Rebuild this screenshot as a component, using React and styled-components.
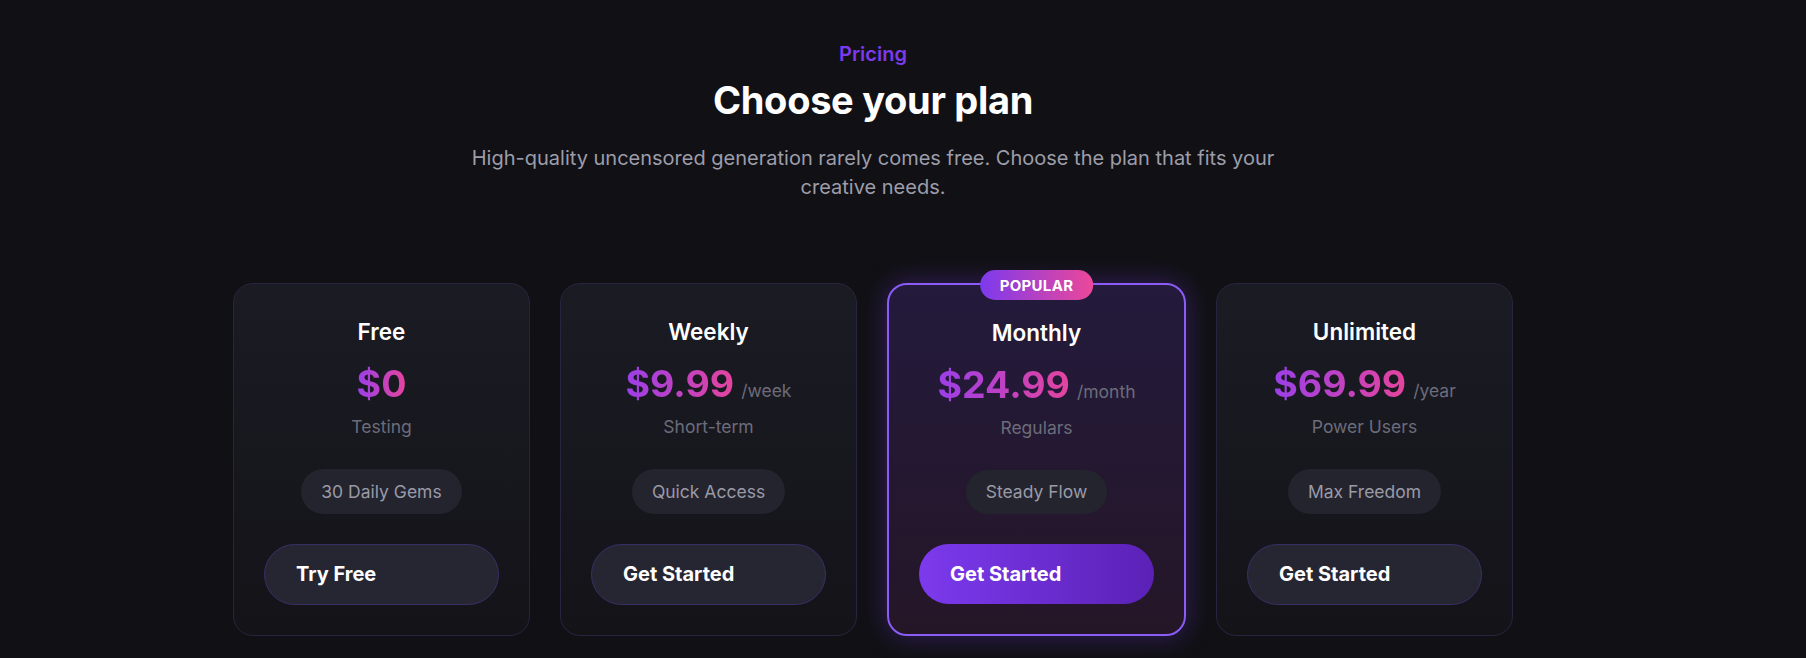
import React from "react";
import styled, { createGlobalStyle } from "styled-components";

const GlobalStyle = createGlobalStyle`
  html, body {
    margin: 0;
    padding: 0;
    background: #111115;
  }
  body {
    font-family: Inter, "Noto Sans", "Liberation Sans", sans-serif;
    -webkit-font-smoothing: antialiased;
  }
  * { box-sizing: border-box; }
`;

const Page = styled.main`
  min-height: 658px;
  background: #111115;
  padding: 40px 60px 0 0;
  display: flex;
  flex-direction: column;
  align-items: center;
`;

const Eyebrow = styled.div`
  font-size: 20px;
  line-height: 28px;
  font-weight: 600;
  color: #7c3aed;
`;

const Title = styled.h1`
  margin: 9px 0 0;
  font-size: 38px;
  line-height: 46px;
  font-weight: 700;
  color: #ffffff;
  letter-spacing: -0.3px;
`;

const Subtitle = styled.p`
  margin: 21px 0 0;
  max-width: 840px;
  text-align: center;
  font-size: 20px;
  line-height: 29px;
  color: #9d9daa;
`;

const Grid = styled.div`
  margin-top: 81px;
  width: 1280px;
  display: grid;
  grid-template-columns: repeat(4, 1fr);
  gap: 30px;
`;

const Card = styled.div`
  position: relative;
  height: 353px;
  border-radius: 20px;
  padding: 34px 30px 30px;
  display: flex;
  flex-direction: column;
  align-items: center;
  border: ${(p) => (p.$popular ? "2px solid #8b5cf6" : "1px solid #2a2340")};
  background: ${(p) =>
    p.$popular
      ? "linear-gradient(180deg, #231a3c 0%, #251627 100%)"
      : "linear-gradient(180deg, #1b1b24 0%, #131318 100%)"};
  box-shadow: ${(p) =>
    p.$popular ? "0 0 26px rgba(124, 58, 237, 0.35)" : "none"};
  padding-top: ${(p) => (p.$popular ? "34px" : "34px")};
`;

const Badge = styled.span`
  position: absolute;
  top: -15px;
  left: 50%;
  transform: translateX(-50%);
  height: 30px;
  padding: 0 20px;
  display: inline-flex;
  align-items: center;
  border-radius: 999px;
  background: linear-gradient(90deg, #7c3aed 0%, #ec4899 100%);
  color: #ffffff;
  font-size: 15px;
  font-weight: 700;
  letter-spacing: 0.3px;
`;

const PlanName = styled.h3`
  margin: 0;
  font-size: 22.5px;
  line-height: 28px;
  font-weight: 600;
  color: #ffffff;
`;

const PriceRow = styled.div`
  margin-top: 18px;
  display: flex;
  align-items: baseline;
  gap: 7px;
`;

const Price = styled.span`
  font-size: 37.5px;
  line-height: 40px;
  font-weight: 700;
  background: linear-gradient(90deg, #9b3fe8 0%, #e5449e 100%);
  -webkit-background-clip: text;
  background-clip: text;
  color: transparent;
`;

const Period = styled.span`
  font-size: 17.5px;
  color: #6c6c7a;
`;

const Tagline = styled.div`
  margin-top: 11px;
  font-size: 17.5px;
  line-height: 24px;
  color: #6c6c7a;
`;

const Pill = styled.div`
  margin-top: 30px;
  height: 45px;
  padding: 0 20px;
  display: inline-flex;
  align-items: center;
  border-radius: 999px;
  background: #24242e;
  color: #9a9aa7;
  font-size: 17.5px;
`;

const Button = styled.button`
  margin-top: 30px;
  width: 235px;
  height: 62px;
  padding: 0 31px;
  display: flex;
  align-items: center;
  border-radius: 999px;
  font-family: inherit;
  font-size: 20px;
  font-weight: 700;
  color: #ffffff;
  cursor: pointer;
  border: ${(p) => (p.$primary ? "none" : "1px solid #3a2e66")};
  background: ${(p) =>
    p.$primary
      ? "linear-gradient(90deg, #7c3aed 0%, #5b21b6 100%)"
      : "#262633"};
`;

const plans = [
  { name: "Free", price: "$0", period: "", tag: "Testing", pill: "30 Daily Gems", cta: "Try Free" },
  { name: "Weekly", price: "$9.99", period: "/week", tag: "Short-term", pill: "Quick Access", cta: "Get Started" },
  { name: "Monthly", price: "$24.99", period: "/month", tag: "Regulars", pill: "Steady Flow", cta: "Get Started", popular: true },
  { name: "Unlimited", price: "$69.99", period: "/year", tag: "Power Users", pill: "Max Freedom", cta: "Get Started" },
];

export default function App() {
  return (
    <>
      <GlobalStyle />
      <Page>
        <Eyebrow>Pricing</Eyebrow>
        <Title>Choose your plan</Title>
        <Subtitle>
          High-quality uncensored generation rarely comes free. Choose the plan that fits your creative needs.
        </Subtitle>
        <Grid>
          {plans.map((p) => (
            <Card key={p.name} $popular={p.popular}>
              {p.popular && <Badge>POPULAR</Badge>}
              <PlanName>{p.name}</PlanName>
              <PriceRow>
                <Price>{p.price}</Price>
                {p.period && <Period>{p.period}</Period>}
              </PriceRow>
              <Tagline>{p.tag}</Tagline>
              <Pill>{p.pill}</Pill>
              <Button $primary={p.popular}>{p.cta}</Button>
            </Card>
          ))}
        </Grid>
      </Page>
    </>
  );
}
